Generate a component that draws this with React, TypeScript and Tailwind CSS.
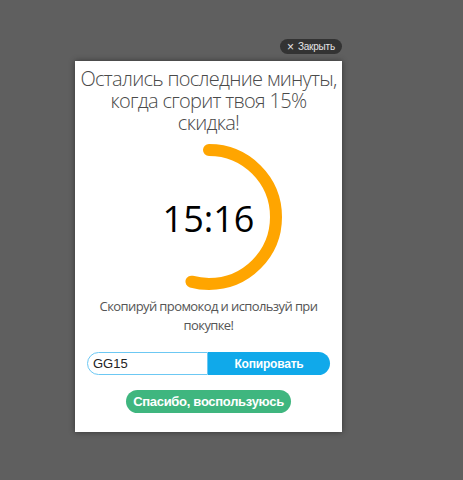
import React from 'react';

export default function App() {
  const r = 67;
  const c = 2 * Math.PI * r;
  const portion = 195 / 360;

  return (
    <div className="w-full h-[480px] bg-[#5f5f5f] overflow-hidden" style={{ fontFamily: '"Open Sans", sans-serif' }}>
      <div className="ml-[75px] pt-[39px] w-[267px]">
        {/* Close pill */}
        <div className="flex justify-end">
          <button
            className="h-[15px] pl-[7px] pr-[7px] rounded-full bg-[#333333] text-[#e6e6e6] text-[10px] leading-[15px] flex items-center gap-[4px] tracking-[-0.2px]"
            style={{ fontFamily: '"Liberation Sans", Arial, sans-serif' }}
          >
            <span className="text-[12px] leading-none">×</span>
            <span>Закрыть</span>
          </button>
        </div>

        {/* Card */}
        <div className="mt-[7px] h-[371px] bg-white shadow-[0_0_6px_rgba(0,0,0,0.45)] flex flex-col items-center">
          <h1 className="mt-[7px] w-[260px] text-center font-light text-[20px] leading-[22px] tracking-[-0.7px] text-[#4a4a4a]">
            Остались последние минуты, когда сгорит твоя 15% скидка!
          </h1>

          <div className="relative mt-[9px] w-[148px] h-[148px]">
            <svg width="148" height="148" viewBox="0 0 148 148">
              <circle
                cx="74"
                cy="74"
                r={r}
                fill="none"
                stroke="#ffa500"
                strokeWidth="12"
                strokeLinecap="round"
                strokeDasharray={`${c * portion} ${c}`}
                transform="rotate(-90 74 74)"
              />
            </svg>
            <div className="absolute inset-0 flex items-center justify-center pt-[4px] text-[36px] text-black">
              15:16
            </div>
          </div>

          <p className="mt-[6px] w-[230px] text-center text-[13px] leading-[19px] tracking-[-0.6px] text-[#555555]">
            Скопируй промокод и используй при покупке!
          </p>

          <div className="mt-[17px] flex w-[243px] h-[23px]" style={{ fontFamily: '"Liberation Sans", Arial, sans-serif' }}>
            <div className="w-[121px] h-full border border-[#6cc8f3] rounded-l-full bg-white pl-[5px] flex items-center text-[13px] text-[#222222]">
              GG15
            </div>
            <button className="flex-1 h-full rounded-r-full bg-[#10a9ea] text-white font-bold text-[12px] tracking-[-0.2px]">
              Копировать
            </button>
          </div>

          <button
            className="mt-[15px] w-[165px] h-[23px] rounded-full bg-[#3fb67f] text-white font-bold text-[13px] tracking-[-0.3px] whitespace-nowrap"
            style={{ fontFamily: '"Liberation Sans", Arial, sans-serif' }}
          >
            Спасибо, воспользуюсь
          </button>
        </div>
      </div>
    </div>
  );
}
